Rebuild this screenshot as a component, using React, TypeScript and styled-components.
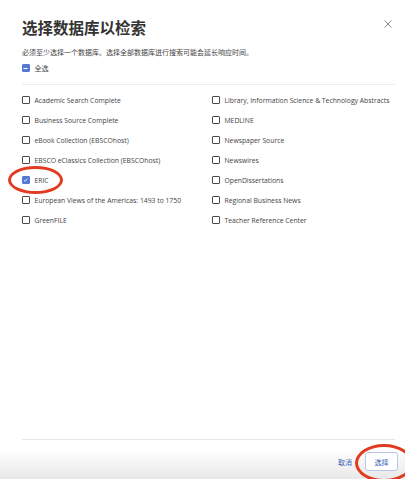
import React from "react";
import styled, { createGlobalStyle } from "styled-components";

const Global = createGlobalStyle`
  html, body { margin: 0; padding: 0; background: #fff; }
  body { font-family: "Open Sans", "Noto Sans CJK SC", sans-serif; }
  * { box-sizing: border-box; }
`;

const Dialog = styled.div`
  position: relative;
  width: 405px;
  height: 479px;
  display: flex;
  flex-direction: column;
  background: #fff;
  overflow: hidden;
`;

const Body = styled.div`
  flex: 1;
  display: flex;
  flex-direction: column;
  padding: 16px 10px 0 22px;
`;

const TitleRow = styled.div`
  display: flex;
  align-items: flex-start;
  justify-content: space-between;
`;

const Title = styled.h1`
  margin: 0;
  font-family: "Noto Sans CJK SC", sans-serif;
  font-size: 15.5px;
  line-height: 22px;
  font-weight: 700;
  color: #333;
  letter-spacing: 0;
`;

const Close = styled.button`
  margin: 3px 2px 0 0;
  padding: 0;
  width: 10px;
  height: 10px;
  border: none;
  background: none;
  display: flex;
  align-items: center;
  justify-content: center;
`;

const Subtitle = styled.p`
  margin: 9px 0 0;
  font-family: "Noto Sans CJK SC", sans-serif;
  font-size: 7px;
  line-height: 10px;
  color: #444;
`;

const SelectAll = styled.label`
  margin-top: 6px;
  display: flex;
  align-items: center;
  gap: 5px;
  height: 10px;
  font-family: "Noto Sans CJK SC", sans-serif;
  font-size: 7px;
  color: #444;
`;

const Divider = styled.div`
  height: 1px;
  background: #ececec;
  margin-top: 11px;
`;

const List = styled.div`
  margin-top: 5px;
  display: grid;
  grid-template-columns: 190px 1fr;
  grid-auto-flow: column;
  grid-template-rows: repeat(7, 20px);
`;

const Item = styled.label`
  display: flex;
  align-items: center;
  gap: 5px;
  font-family: "Open Sans", sans-serif;
  font-size: 6.8px;
  color: #444;
  white-space: nowrap;
`;

const Box = styled.span<{ $on?: boolean }>`
  flex: none;
  width: 7.5px;
  height: 7.5px;
  border-radius: 1px;
  border: 1px solid ${(p) => (p.$on ? "#5478d4" : "#4a4a4a")};
  background: ${(p) => (p.$on ? "#5478d4" : "#fff")};
  display: flex;
  align-items: center;
  justify-content: center;
`;

const Footer = styled.div`
  height: 40px;
  margin-left: 22px;
  margin-right: 10px;
  border-top: 1px solid #e6e6e6;
`;

const FooterBar = styled.div`
  position: absolute;
  left: 0;
  right: 0;
  bottom: 0;
  height: 30px;
  background: linear-gradient(#ffffff, #e8e8e8);
`;

const Actions = styled.div`
  position: absolute;
  right: 7px;
  bottom: 8px;
  display: flex;
  align-items: center;
  gap: 13px;
`;

const TextButton = styled.button`
  border: none;
  background: none;
  padding: 0;
  font-family: "Noto Sans CJK SC", sans-serif;
  font-size: 7px;
  color: #3a5cb5;
`;

const OutlineButton = styled.button`
  width: 33px;
  height: 19px;
  border: 1px solid #b9c6e6;
  border-radius: 3px;
  background: #fff;
  padding: 0;
  font-family: "Noto Sans CJK SC", sans-serif;
  font-size: 7px;
  color: #3a5cb5;
`;

const Mark = styled.div<{ $x: number; $y: number; $w: number; $h: number }>`
  position: absolute;
  left: ${(p) => p.$x}px;
  top: ${(p) => p.$y}px;
  width: ${(p) => p.$w}px;
  height: ${(p) => p.$h}px;
  border: 3px solid #e23b22;
  border-radius: 50%;
  pointer-events: none;
`;

const left = [
  "Academic Search Complete",
  "Business Source Complete",
  "eBook Collection (EBSCOhost)",
  "EBSCO eClassics Collection (EBSCOhost)",
  "ERIC",
  "European Views of the Americas: 1493 to 1750",
  "GreenFILE",
];
const right = [
  "Library, Information Science & Technology Abstracts",
  "MEDLINE",
  "Newspaper Source",
  "Newswires",
  "OpenDissertations",
  "Regional Business News",
  "Teacher Reference Center",
];

export default function App() {
  const all = [...left, ...right];
  return (
    <>
      <Global />
      <Dialog>
        <FooterBar />
        <Body>
          <TitleRow>
            <Title>选择数据库以检索</Title>
            <Close aria-label="close">
              <svg width="8" height="8" viewBox="0 0 8 8">
                <path d="M0.5 0.5L7.5 7.5M7.5 0.5L0.5 7.5" stroke="#777" strokeWidth="0.9" />
              </svg>
            </Close>
          </TitleRow>
          <Subtitle>必须至少选择一个数据库。选择全部数据库进行搜索可能会延长响应时间。</Subtitle>
          <SelectAll>
            <Box $on>
              <svg width="5" height="5" viewBox="0 0 5 5">
                <path d="M0.5 2.5H4.5" stroke="#fff" strokeWidth="1.1" />
              </svg>
            </Box>
            全选
          </SelectAll>
          <Divider />
          <List>
            {all.map((name) => {
              const on = name === "ERIC";
              return (
                <Item key={name}>
                  <Box $on={on}>
                    {on && (
                      <svg width="6" height="6" viewBox="0 0 6 6">
                        <path d="M1 3.1L2.4 4.4L5 1.5" stroke="#fff" strokeWidth="0.9" fill="none" />
                      </svg>
                    )}
                  </Box>
                  {name}
                </Item>
              );
            })}
          </List>
        </Body>
        <Footer />
        <Actions>
          <TextButton>取消</TextButton>
          <OutlineButton>选择</OutlineButton>
        </Actions>
        <Mark $x={8} $y={166} $w={55} $h={28} />
        <Mark $x={355} $y={444} $w={58} $h={38} />
      </Dialog>
    </>
  );
}
